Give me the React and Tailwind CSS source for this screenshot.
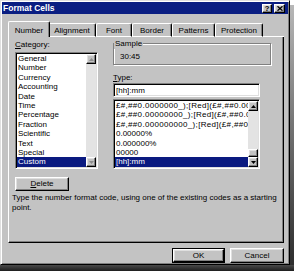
import React from "react";

const raised =
  "border border-t-white border-l-white border-r-black border-b-black shadow-[inset_-1px_-1px_0_#808080,inset_1px_1px_0_#dfdfdf]";
const sunken =
  "border border-t-[#808080] border-l-[#808080] border-r-white border-b-white shadow-[inset_1px_1px_0_#000,inset_-1px_-1px_0_#dfdfdf]";

const categories = [
  "General",
  "Number",
  "Currency",
  "Accounting",
  "Date",
  "Time",
  "Percentage",
  "Fraction",
  "Scientific",
  "Text",
  "Special",
  "Custom",
];

const codes = [
  "£#,##0.0000000_);[Red](£#,##0.0000000)",
  "£#,##0.00000000_);[Red](£#,##0.00000000)",
  "£#,##0.000000000_);[Red](£#,##0.000000000)",
  "0.00000%",
  "0.000000%",
  "00000",
  "[hh]:mm",
];

const tabs = [
  { name: "Number", cls: "w-[42px]" },
  { name: "Alignment", cls: "w-[48px]" },
  { name: "Font", cls: "w-[36px]" },
  { name: "Border", cls: "w-[40px]" },
  { name: "Patterns", cls: "w-[43px]" },
  { name: "Protection", cls: "w-[48px]" },
];

function Arrow({ up, off }) {
  return (
    <div className={`${raised} h-[10px] bg-[#c3c3c3] flex items-center justify-center`}>
      <svg width="5" height="3" viewBox="0 0 5 3">
        <path d={up ? "M2.5 0L5 3H0Z" : "M0 0H5L2.5 3Z"} fill={off ? "#8c8c8c" : "#000"} />
      </svg>
    </div>
  );
}

function ScrollBar({ off, thumb }) {
  return (
    <div className="w-[10px] flex flex-col">
      <Arrow up off={off} />
      <div className="flex-1 bg-[#e3e3e3] flex flex-col justify-end">
        {thumb && <div className={`${raised} h-[8px] bg-[#c3c3c3]`} />}
      </div>
      <Arrow off={off} />
    </div>
  );
}

export default function App() {
  return (
    <div className="w-[294px] h-[271px] bg-white flex flex-col font-['Liberation_Sans',Arial,sans-serif] text-[8px] leading-[9.5px] text-black">
      <div className="flex">
        {/* dialog */}
        <div className="w-[290px] h-[265px] border border-t-[#dfdfdf] border-l-[#dfdfdf] border-r-black border-b-black shadow-[inset_1px_1px_0_#fff,inset_-1px_-1px_0_#808080] bg-[#c3c3c3] p-[1px] flex flex-col">
          {/* title bar */}
          <div className="h-[12px] bg-[#0a1e82] flex items-center justify-between pl-[1px] pr-[3px]">
            <span className="text-white font-bold text-[8.5px] leading-[12px]">Format Cells</span>
            <div className="flex gap-[2px]">
              <div className={`${raised} w-[10px] h-[9px] bg-[#c3c3c3] flex items-center justify-center font-bold text-[7.5px] leading-[7px]`}>
                ?
              </div>
              <div className={`${raised} w-[11px] h-[9px] bg-[#c3c3c3] flex items-center justify-center`}>
                <svg width="6" height="5" viewBox="0 0 6 5">
                  <path d="M0.5 0.3L5.5 4.7M5.5 0.3L0.5 4.7" stroke="#000" strokeWidth="1.3" />
                </svg>
              </div>
            </div>
          </div>

          {/* tabs */}
          <div className="mt-[7px] ml-[6px] mr-[4px] h-[16px] flex items-end pl-[2px]">
            {tabs.map((t, i) =>
              i === 0 ? (
                <div
                  key={t.name}
                  className={`relative z-10 -mx-[2px] ${t.cls} h-[16px] bg-[#c3c3c3] border-l border-t border-r border-l-white border-t-white border-r-black rounded-t-[2px] shadow-[inset_-1px_0_0_#808080] pt-[4px] text-center`}
                >
                  {t.name}
                </div>
              ) : (
                <div
                  key={t.name}
                  className={`${t.cls} h-[14px] border-l border-t border-r border-b border-l-white border-t-white border-r-black border-b-white rounded-t-[2px] shadow-[inset_-1px_0_0_#808080] pt-[2px] text-center`}
                >
                  {t.name}
                </div>
              )
            )}
            <div className="flex-1 h-px bg-white" />
          </div>

          {/* panel */}
          <div className="ml-[6px] mr-[4px] h-[206px] border-l border-r border-b border-l-white border-r-black border-b-black shadow-[inset_-1px_-1px_0_#808080] flex flex-col">
            <div className="flex pl-[6px]">
              <div className="w-[83px] pt-[3px]">
                <div className="h-[10px] leading-[10px]">
                  <span className="underline">C</span>ategory:
                </div>
                <div className={`${sunken} mt-[2px] h-[117px] bg-white flex p-[1px]`}>
                  <div className="flex-1 flex flex-col">
                    {categories.map((c) => (
                      <div
                        key={c}
                        className={`h-[9.4px] leading-[9.4px] pl-[1px] whitespace-nowrap ${
                          c === "Custom" ? "bg-[#0a1a80] text-white" : ""
                        }`}
                      >
                        {c}
                      </div>
                    ))}
                  </div>
                  <ScrollBar off />
                </div>
              </div>

              <div className="ml-[15px] w-[158px] pt-[6px]">
                <div className="h-[22px] border border-[#808080] shadow-[inset_1px_1px_0_#fff,1px_1px_0_#fff]">
                  <div className="-mt-[5px] px-[1px] w-fit bg-[#c3c3c3]">Sample</div>
                  <div className="ml-[6px] mt-[3.5px]">30:45</div>
                </div>
                <div className="mt-[8px] h-[10px] leading-[10px]">
                  <span className="underline">T</span>ype:
                </div>
                <div className={`${sunken} w-[147px] h-[14px] bg-white pl-[2px] pt-[2px] leading-[10px] overflow-hidden`}>
                  [hh]:mm
                </div>
                <div className={`${sunken} mt-[2px] w-[147px] h-[70px] bg-white flex p-[1px]`}>
                  <div className="flex-1 flex flex-col overflow-hidden">
                    {codes.map((c) => (
                      <div
                        key={c}
                        className={`h-[9.4px] leading-[9.4px] pl-[1px] whitespace-nowrap overflow-hidden ${
                          c.startsWith("£") ? "tracking-[0.32px]" : ""
                        } ${c === "[hh]:mm" ? "bg-[#0a1a80] text-white" : ""}`}
                      >
                        {c}
                      </div>
                    ))}
                  </div>
                  <ScrollBar thumb />
                </div>
              </div>
            </div>

            <div className={`${raised} ml-[6px] mt-[8px] w-[54px] h-[14px] flex items-center justify-center`}>
              <span>
                <span className="underline">D</span>elete
              </span>
            </div>

            <div className="mt-[2px] pl-[3px] pr-[2px]">
              Type the number format code, using one of the existing codes as a starting point.
            </div>
          </div>

          {/* buttons */}
          <div className="mt-[5px] mr-[4px] flex justify-end gap-[5px]">
            <div className="w-[53px] h-[15px] border border-black">
              <div className={`${raised} h-full flex items-center justify-center`}>OK</div>
            </div>
            <div className={`${raised} w-[54px] h-[15px] flex items-center justify-center`}>Cancel</div>
          </div>
        </div>

        {/* right shadow */}
        <div className="w-[4px] flex flex-col">
          <div className="h-[5px] bg-white" />
          <div className="flex-1 bg-linear-to-b from-[#b8b8b8] to-[#2e2e2e]" />
        </div>
      </div>
      {/* bottom shadow */}
      <div className="h-[6px] bg-linear-to-b from-[#4a4a4a] to-[#1e1e1e]" />
    </div>
  );
}
